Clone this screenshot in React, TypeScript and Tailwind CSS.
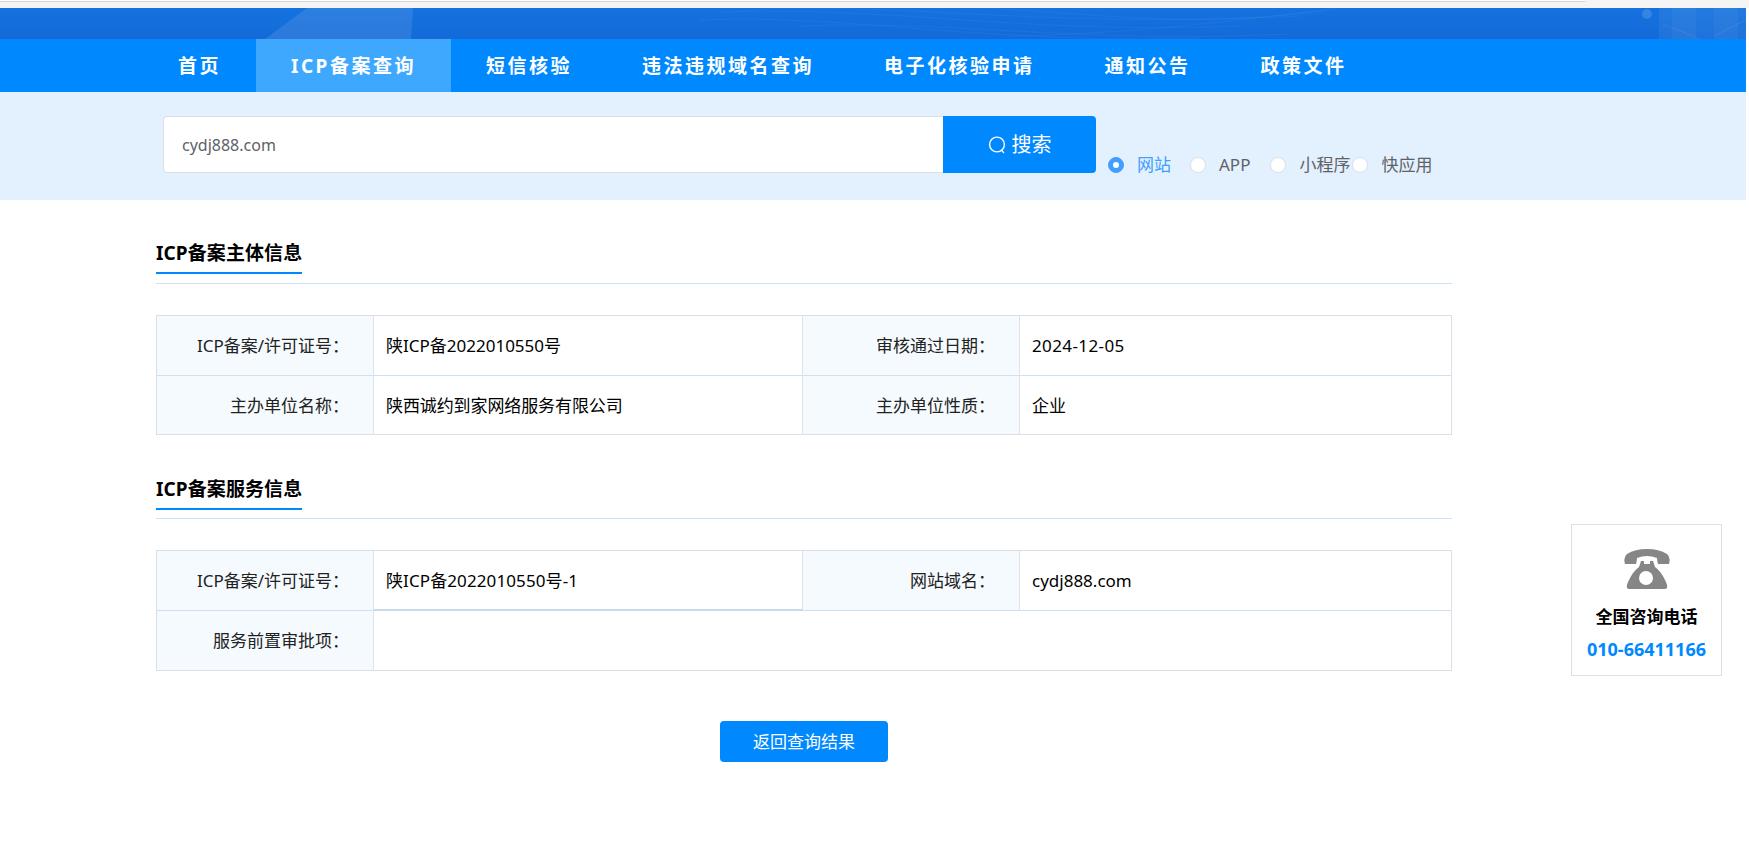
import React from "react";

const font = { fontFamily: '"Noto Sans", "Noto Sans CJK SC", sans-serif' };

const navItems = ["首页", "ICP备案查询", "短信核验", "违法违规域名查询", "电子化核验申请", "通知公告", "政策文件"];

function Banner() {
  const waves = [
    "M720 12 C900 6 1010 34 1240 26",
    "M760 9 C930 4 1040 28 1300 16",
    "M800 26 C960 20 1070 44 1290 34",
    "M700 20 C850 14 980 44 1200 38",
    "M980 8 C1090 12 1180 30 1330 10",
    "M1010 36 C1120 34 1210 24 1340 8",
  ];
  return (
    <div className="relative h-[31px] w-[1746px] overflow-hidden bg-gradient-to-b from-[#1572de] to-[#136ad8]">
      <svg className="absolute inset-0" width="1746" height="31" viewBox="0 8 1746 31" fill="none">
        <polygon points="307,8 413,8 411,39 265,39" fill="#ffffff" fillOpacity="0.1" />
        {waves.map((d) => (
          <path key={d} d={d} stroke="#4a9cee" strokeOpacity="0.16" strokeWidth="1" />
        ))}
        <circle cx="1647" cy="14" r="5" fill="#ffffff" fillOpacity="0.14" />
        <rect x="1659" y="8" width="87" height="31" fill="#ffffff" fillOpacity="0.06" />
        <rect x="1672" y="8" width="24" height="31" fill="#ffffff" fillOpacity="0.04" />
        <rect x="1714" y="8" width="24" height="31" fill="#ffffff" fillOpacity="0.04" />
        <path d="M1662 24 L1700 39 M1714 36 L1746 20" stroke="#ffffff" strokeOpacity="0.08" />
      </svg>
    </div>
  );
}

function Nav() {
  return (
    <nav className="flex h-[53px] w-[1746px] bg-[#0089ff] pl-[143px]">
      {navItems.map((item, i) => (
        <div
          key={item}
          className={`flex h-full items-center px-[35px] pt-[1px] text-[19px] font-bold tracking-[2.5px] text-white ${i === 1 ? "bg-[#3ea8ff]" : ""}`}
        >
          {item}
        </div>
      ))}
    </nav>
  );
}

function Radio({ label, active, className }: { label: string; active?: boolean; className: string }) {
  return (
    <div className={`flex items-center gap-[13px] ${className}`}>
      <span
        className={`flex h-4 w-4 items-center justify-center rounded-full border ${active ? "border-[#409eff] bg-[#409eff]" : "border-[#dcdfe6] bg-white"}`}
      >
        {active && <span className="h-[6px] w-[6px] rounded-full bg-white" />}
      </span>
      <span className={`text-[17px] leading-6 ${active ? "text-[#409eff]" : "text-[#606266]"}`}>{label}</span>
    </div>
  );
}

function SearchBand() {
  return (
    <div className="flex h-[108px] w-[1746px] bg-[#e3f1ff] pl-[163px] pt-[24px]">
      <div className="flex h-[57px] w-[780px] items-center rounded-l border border-r-0 border-[#dcdfe6] bg-white pl-[18px] pt-[1px] text-base text-[#606266]">
        cydj888.com
      </div>
      <button className="flex h-[57px] w-[153px] items-center justify-center gap-[6px] rounded-r bg-[#0089ff] pt-[1px] text-[20px] text-white">
        <svg width="18" height="18" viewBox="0 0 18 18" fill="none" stroke="white" strokeWidth="1.4" strokeLinecap="round">
          <circle cx="9" cy="8.5" r="7.4" />
          <path d="M13.6 14.2 L15.6 16.6" />
        </svg>
        搜索
      </button>
      <div className="ml-[12px] mt-[37px] flex h-6 items-center">
        <Radio label="网站" active className="mr-[19px]" />
        <Radio label="APP" className="mr-[20px]" />
        <Radio label="小程序" className="mr-[2px]" />
        <Radio label="快应用" className="" />
      </div>
    </div>
  );
}

function SectionTitle({ title, className, gap }: { title: string; className: string; gap: string }) {
  return (
    <div className={`border-b border-[#cfe3f7] ${className}`}>
      <div className={`inline-block border-b-2 border-[#0089ff] text-[19px] font-bold leading-7 tracking-[0.1px] text-black ${gap}`}>
        {title}
      </div>
    </div>
  );
}

function Label({ children, className = "" }: { children?: React.ReactNode; className?: string }) {
  return (
    <div className={`flex items-center justify-end border-r border-[#dde3ea] bg-[#f5fafe] pr-[24px] text-[17px] text-[#222] ${className}`}>
      {children}
    </div>
  );
}

function Value({ children, className = "" }: { children?: React.ReactNode; className?: string }) {
  return <div className={`flex items-center pl-[12px] text-[17px] text-black ${className}`}>{children}</div>;
}

function MainInfo() {
  return (
    <div className="mt-[31px] grid h-[120px] grid-cols-[217px_429px_217px_1fr] grid-rows-[60px_58px] border border-[#dcdfe6]">
      <Label className="border-b border-b-[#cfe0f0]">ICP备案/许可证号：</Label>
      <Value className="border-b border-r border-[#dde3ea] border-b-[#cfe0f0]">陕ICP备2022010550号</Value>
      <Label className="border-b border-b-[#cfe0f0]">审核通过日期：</Label>
      <Value className="border-b border-[#cfe0f0] tracking-[0.4px]">2024-12-05</Value>
      <Label className="pt-[1px]">主办单位名称：</Label>
      <Value className="border-r border-[#dde3ea] pt-[1px] tracking-[-0.1px]">陕西诚约到家网络服务有限公司</Value>
      <Label className="pt-[1px]">主办单位性质：</Label>
      <Value className="pt-[1px]">企业</Value>
    </div>
  );
}

function ServiceInfo() {
  return (
    <div className="mt-[31px] grid h-[121px] grid-cols-[217px_429px_217px_1fr] grid-rows-[60px_59px] border border-[#dcdfe6]">
      <Label className="border-b border-b-[#cfe0f0]">ICP备案/许可证号：</Label>
      <Value className="border-b-2 border-r border-[#dde3ea] border-b-[#c5dcef] pt-[1px] tracking-[0.1px]">陕ICP备2022010550号-1</Value>
      <Label className="border-b border-b-[#cfe0f0]">网站域名：</Label>
      <Value className="border-b border-[#cfe0f0]">cydj888.com</Value>
      <Label>服务前置审批项：</Label>
      <Value className="col-span-3" />
    </div>
  );
}

function PhoneCard() {
  return (
    <aside className="fixed right-[27px] top-[524px] flex h-[152px] w-[151px] flex-col items-center border border-[#dfe1ea] bg-white pt-[24px]">
      <svg width="46" height="41" viewBox="0 0 46 41" fill="#868686">
        <path d="M1 15 Q-1 8 3 5 Q11 0 23 0 Q35 0 43 5 Q47 8 45 15 L34 15 Q33 11 33 9 Q28 7 23 7 Q18 7 13 9 Q13 11 12 15 Z" />
        <path
          fillRule="evenodd"
          d="M17 12 L20 12 L20 15 L26 15 L26 12 L29 12 L31 18 Q37 22 42 33 Q45 40 41 40 L5 40 Q1 40 4 33 Q9 22 15 18 Z M22 22 A7 7 0 1 0 22 36 A7 7 0 1 0 22 22 Z"
        />
      </svg>
      <div className="mt-[15px] text-[17px] font-bold leading-6 text-black">全国咨询电话</div>
      <div className="mt-[8px] text-[18px] font-bold leading-6 text-[#0089ff]">010-66411166</div>
    </aside>
  );
}

export default function App() {
  return (
    <div className="min-h-[845px] bg-white" style={font}>
      <div className="h-2 bg-[#f5f5f5]">
        <div className="h-[2px] w-[1586px] rounded-br-[4px] border-b border-[#d4d4d4] bg-white" />
      </div>
      <Banner />
      <Nav />
      <SearchBand />
      <main className="ml-[156px] w-[1296px]">
        <SectionTitle title="ICP备案主体信息" className="pb-[9px] pt-[40px]" gap="pb-[5px] -mt-[1px]" />
        <MainInfo />
        <SectionTitle title="ICP备案服务信息" className="pb-[8px] pt-[41px]" gap="pb-[5px] -mt-[1px]" />
        <ServiceInfo />
        <div className="mt-[50px] flex justify-center">
          <button className="flex h-[41px] w-[168px] items-center justify-center rounded bg-[#0089ff] text-[17px] text-white">
            返回查询结果
          </button>
        </div>
      </main>
      <PhoneCard />
    </div>
  );
}
